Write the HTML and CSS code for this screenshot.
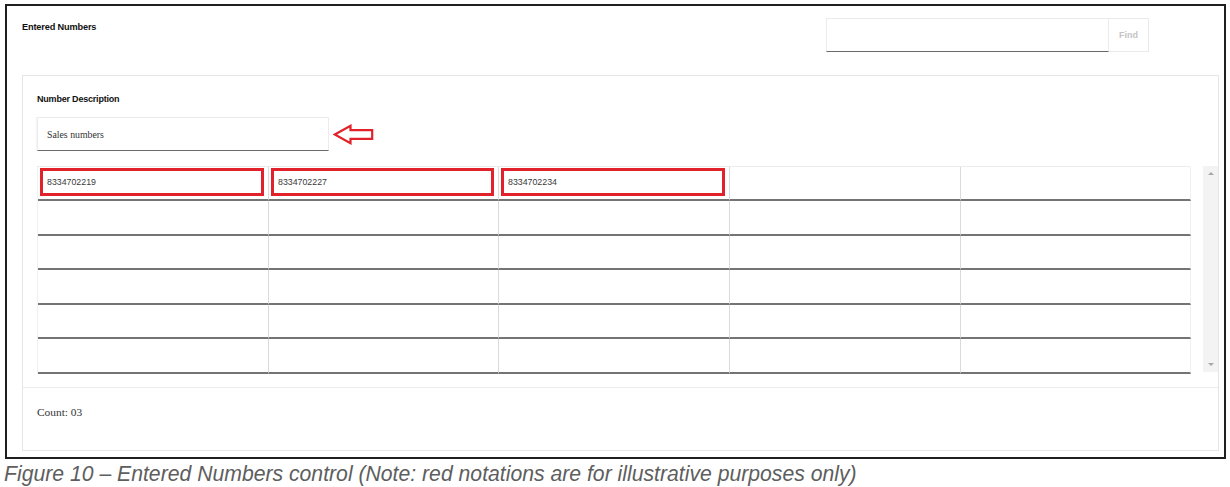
FILE: index.html
```html
<!DOCTYPE html>
<html lang="en">
<head>
<meta charset="utf-8">
<title>Entered Numbers control</title>
<link rel="stylesheet" href="styles.css">
</head>
<body>
<div class="frame">
  <div class="header">
    <div class="title">Entered Numbers</div>
    <div class="search">
      <div class="search-input"></div>
      <div class="find-btn">Find</div>
    </div>
  </div>
  <div class="panel">
    <div class="panel-body">
      <div class="label">Number Description</div>
      <div class="desc-row">
        <div class="desc-input">Sales numbers</div>
        <svg class="arrow" width="41" height="21" viewBox="0 0 41 21" aria-hidden="true">
          <path d="M1.8 10.5 L17.5 1.8 L17.5 6.2 L39.2 6.2 L39.2 14.8 L17.5 14.8 L17.5 19.2 Z" fill="none" stroke="#e1222b" stroke-width="2.2" stroke-linejoin="miter"/>
        </svg>
      </div>
      <div class="table-row">
        <div class="grid">
          <div class="cell"><div class="mark">8334702219</div></div>
          <div class="cell"><div class="mark">8334702227</div></div>
          <div class="cell"><div class="mark">8334702234</div></div>
          <div class="cell"></div>
          <div class="cell"></div>

          <div class="cell"></div><div class="cell"></div><div class="cell"></div><div class="cell"></div><div class="cell"></div>
          <div class="cell"></div><div class="cell"></div><div class="cell"></div><div class="cell"></div><div class="cell"></div>
          <div class="cell"></div><div class="cell"></div><div class="cell"></div><div class="cell"></div><div class="cell"></div>
          <div class="cell"></div><div class="cell"></div><div class="cell"></div><div class="cell"></div><div class="cell"></div>
          <div class="cell"></div><div class="cell"></div><div class="cell"></div><div class="cell"></div><div class="cell"></div>
        </div>
        <div class="scrollbar">
          <span class="tri up"></span>
          <span class="tri down"></span>
        </div>
      </div>
    </div>
    <div class="footer">Count: 03</div>
  </div>
</div>
<div class="caption">Figure 10 – Entered Numbers control (Note: red notations are for illustrative purposes only)</div>
</body>
</html>
```
FILE: styles.css
```css
* { box-sizing: border-box; }

html, body {
  margin: 0;
  padding: 0;
  background: #ffffff;
}

body {
  font-family: "Liberation Sans", Arial, sans-serif;
  color: #222;
}

.frame {
  margin: 4px 0 0 5px;
  width: 1221px;
  height: 455px;
  border: 2px solid #1f1f1f;
  display: flex;
  flex-direction: column;
}

.header {
  height: 69px;
  flex: none;
  display: flex;
  justify-content: space-between;
  align-items: flex-start;
  padding-left: 15px;
  padding-right: 75px;
}

.title {
  margin-top: 15px;
  font-size: 9.2px;
  line-height: 12px;
  font-weight: bold;
  letter-spacing: -0.15px;
  color: #111;
}

.search {
  margin-top: 12px;
  display: flex;
}

.search-input {
  width: 283px;
  height: 34px;
  border: 1px solid #ececec;
  border-bottom: 1.5px solid #6a6a6a;
  background: #fff;
}

.find-btn {
  width: 40px;
  height: 34px;
  border: 1px solid #e9e9e9;
  border-left: none;
  display: flex;
  align-items: center;
  justify-content: center;
  font-size: 9px;
  font-weight: bold;
  color: #c4c4c4;
}

.panel {
  margin-left: 15px;
  margin-right: 5px;
  height: 376px;
  border: 1px solid #e6e6e6;
  display: flex;
  flex-direction: column;
}

.panel-body {
  padding: 17px 0 13px 14px;
}

.label {
  font-size: 9px;
  line-height: 12px;
  font-weight: bold;
  letter-spacing: -0.2px;
  color: #111;
}

.desc-row {
  margin-top: 12px;
  display: flex;
  align-items: center;
}

.desc-input {
  width: 292px;
  height: 34px;
  border: 1px solid #ececec;
  border-bottom: 1.5px solid #6a6a6a;
  box-shadow: -1px 0 1px rgba(0,0,0,0.04);
  padding-left: 9px;
  display: flex;
  align-items: center;
  font-family: "Liberation Serif", "Times New Roman", serif;
  font-size: 9.8px;
  color: #333;
}

.arrow {
  margin-left: 4px;
  display: block;
}

.table-row {
  margin-top: 15px;
  display: flex;
  align-items: flex-start;
}

.grid {
  width: 1153px;
  display: grid;
  grid-template-columns: 231px 230px 231px 231px 230px;
  grid-template-rows: 34px 35px 34px 35px 34px 35px;
  border-top: 1px solid #ececec;
  border-left: 1px solid #f0f0f0;
}

.cell {
  border-right: 1.3px solid #dadada;
  border-bottom: 2px solid #747474;
  display: flex;
}

.cell:nth-child(5n) {
  border-right: 1px solid #f0f0f0;
}

.mark {
  flex: 1;
  margin: 1px 4px 3px 2px;
  border: 3px solid #e1222b;
  padding-left: 4px;
  display: flex;
  align-items: center;
  font-family: "Liberation Sans", Arial, sans-serif;
  font-size: 8.8px;
  color: #3a3a3a;
}

.scrollbar {
  margin-left: 13px;
  width: 15px;
  height: 206px;
  background: #f3f3f3;
  display: flex;
  flex-direction: column;
  justify-content: space-between;
  align-items: center;
  padding: 6px 0 6px;
}

.tri {
  width: 0;
  height: 0;
  border-left: 3px solid transparent;
  border-right: 3px solid transparent;
}

.tri.up {
  border-bottom: 3px solid #a8a8a8;
}

.tri.down {
  border-top: 3px solid #a8a8a8;
}

.footer {
  border-top: 1px solid #ececec;
  flex: 1;
  padding: 17px 0 0 14px;
  font-family: "Liberation Serif", "Times New Roman", serif;
  font-size: 11.4px;
  line-height: 14px;
  color: #333;
}

.caption {
  margin-top: 3px;
  padding-left: 4px;
  font-family: "Liberation Sans", Arial, sans-serif;
  font-style: italic;
  font-size: 21.2px;
  line-height: 24px;
  color: #5e5e5e;
  white-space: nowrap;
}
```
